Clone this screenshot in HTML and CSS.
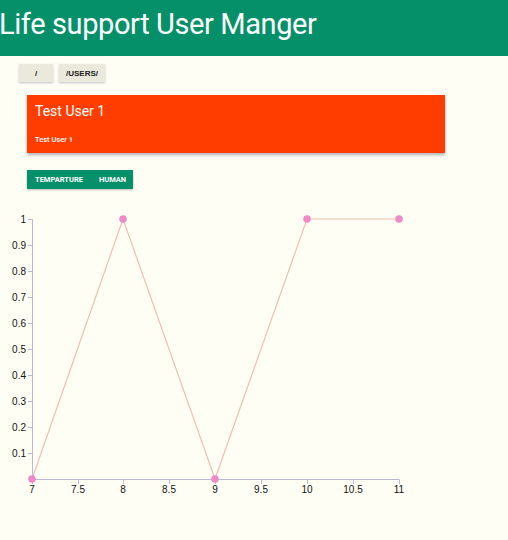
FILE: index.html
```html
<!DOCTYPE html>
<html>
<head>
<meta charset="utf-8">
<link rel="stylesheet" href="styles.css">
</head>
<body>
<header class="topbar"><h1 class="title">Life support User Manger</h1></header>
<nav class="crumbs">
  <button class="crumb crumb-root">/</button>
  <button class="crumb crumb-users">/USERS/</button>
</nav>
<section class="card">
  <h2 class="card-title">Test User 1</h2>
  <p class="card-sub">Test User 1</p>
</section>
<div class="tabs">
  <button class="tab">TEMPARTURE</button>
  <button class="tab">HUMAN</button>
</div>
<svg class="chart" width="508" height="310" viewBox="0 200 508 310">
  <g class="axis" stroke="#b9b7d6" stroke-width="1" fill="none">
    <line x1="32.5" y1="219" x2="32.5" y2="479.5"/>
    <line x1="32" y1="479.5" x2="399.5" y2="479.5"/>
    <line x1="28" y1="219.5" x2="32" y2="219.5"/>
    <line x1="28" y1="245.5" x2="32" y2="245.5"/>
    <line x1="28" y1="271.5" x2="32" y2="271.5"/>
    <line x1="28" y1="297.5" x2="32" y2="297.5"/>
    <line x1="28" y1="323.5" x2="32" y2="323.5"/>
    <line x1="28" y1="349.5" x2="32" y2="349.5"/>
    <line x1="28" y1="375.5" x2="32" y2="375.5"/>
    <line x1="28" y1="401.5" x2="32" y2="401.5"/>
    <line x1="28" y1="427.5" x2="32" y2="427.5"/>
    <line x1="28" y1="453.5" x2="32" y2="453.5"/>
    <line x1="32.5" y1="480" x2="32.5" y2="484"/>
    <line x1="78.5" y1="480" x2="78.5" y2="484"/>
    <line x1="123.5" y1="480" x2="123.5" y2="484"/>
    <line x1="169.5" y1="480" x2="169.5" y2="484"/>
    <line x1="215.5" y1="480" x2="215.5" y2="484"/>
    <line x1="261.5" y1="480" x2="261.5" y2="484"/>
    <line x1="307.5" y1="480" x2="307.5" y2="484"/>
    <line x1="353.5" y1="480" x2="353.5" y2="484"/>
    <line x1="399.5" y1="480" x2="399.5" y2="484"/>
  </g>
  <g class="ylabels" text-anchor="end">
    <text x="26" y="223">1</text>
    <text x="26" y="249">0.9</text>
    <text x="26" y="275">0.8</text>
    <text x="26" y="301">0.7</text>
    <text x="26" y="327">0.6</text>
    <text x="26" y="353">0.5</text>
    <text x="26" y="379">0.4</text>
    <text x="26" y="405">0.3</text>
    <text x="26" y="431">0.2</text>
    <text x="26" y="457">0.1</text>
  </g>
  <g class="xlabels" text-anchor="middle">
    <text x="32" y="493">7</text>
    <text x="78" y="493">7.5</text>
    <text x="123" y="493">8</text>
    <text x="169" y="493">8.5</text>
    <text x="215" y="493">9</text>
    <text x="261" y="493">9.5</text>
    <text x="307" y="493">10</text>
    <text x="353" y="493">10.5</text>
    <text x="399" y="493">11</text>
  </g>
  <polyline points="32,479 123,219 215,479 307,219 399,219" fill="none" stroke="#f1bdb0" stroke-width="1.2"/>
  <g fill="#f08ac6">
    <circle cx="32" cy="479" r="3.8"/>
    <circle cx="123" cy="219" r="3.8"/>
    <circle cx="215" cy="479" r="3.8"/>
    <circle cx="307" cy="219" r="3.8"/>
    <circle cx="399" cy="219" r="3.8"/>
  </g>
</svg>
</body>
</html>
```
FILE: styles.css
```css
html, body {
  margin: 0;
  padding: 0;
  background: #fefef4;
  font-family: Roboto, "Liberation Sans", sans-serif;
}
.topbar {
  background: #06906a;
  height: 56px;
  display: flex;
  align-items: center;
  overflow: hidden;
}
.title {
  margin: 0 0 0 -1px;
  color: #ffffff;
  font-weight: 400;
  font-size: 29px;
  line-height: 40px;
  letter-spacing: -0.4px;
  position: relative;
  top: -4px;
}
.crumbs {
  display: flex;
  gap: 6px;
  padding: 8px 0 0 19px;
  height: 18px;
}
.crumb {
  border: 0;
  margin: 0;
  padding: 0;
  height: 18px;
  background: #ebe9dc;
  box-shadow: 0 1px 2px rgba(80, 80, 120, 0.35);
  font-family: "Liberation Sans", sans-serif;
  font-size: 8px;
  font-weight: 700;
  color: #222;
}
.crumb-root { width: 34px; }
.crumb-users { width: 46px; }
.card {
  margin: 13px 0 0 27px;
  width: 418px;
  height: 58px;
  box-sizing: border-box;
  background: #ff3d00;
  box-shadow: 0 2px 3px rgba(60, 60, 90, 0.4);
  padding: 8px 0 0 8px;
  color: #fff;
}
.card-title {
  margin: 0;
  font-size: 14px;
  font-weight: 400;
  line-height: 16px;
}
.card-sub {
  margin: 16px 0 0 0;
  font-size: 7.5px;
  font-weight: 500;
  line-height: 10px;
}
.tabs {
  display: flex;
  margin: 17px 0 0 27px;
  width: 106px;
  height: 19px;
  background: #06906a;
  box-shadow: 0 1px 2px rgba(60, 60, 90, 0.35);
}
.tab {
  border: 0;
  background: transparent;
  color: #fff;
  font-family: Roboto, "Liberation Sans", sans-serif;
  font-size: 7.5px;
  font-weight: 700;
  padding: 0 0 0 8px;
  margin: 0;
  height: 19px;
  margin-right: 8px;
}
.chart {
  display: block;
  margin-top: 11px;
}
.chart text {
  font-family: "Liberation Sans", Arial, sans-serif;
  font-size: 10px;
  fill: #111;
}
```
